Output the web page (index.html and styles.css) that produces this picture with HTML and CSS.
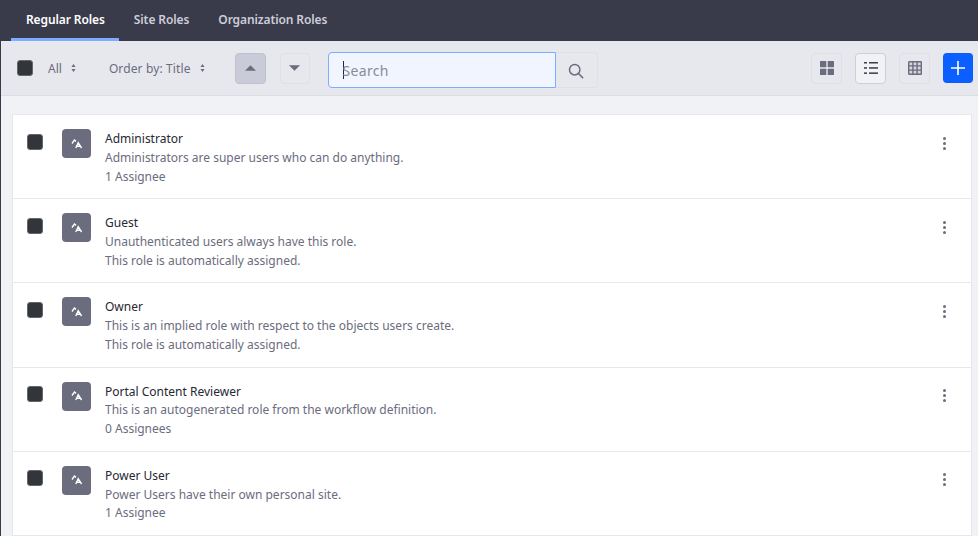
FILE: index.html
```html
<!DOCTYPE html>
<html lang="en">
<head>
  <meta charset="UTF-8">
  <title>Roles</title>
  <link rel="stylesheet" href="styles.css">
</head>
<body>
  <nav class="tabs">
    <a class="tab active">Regular Roles</a>
    <a class="tab">Site Roles</a>
    <a class="tab">Organization Roles</a>
  </nav>

  <div class="toolbar">
    <span class="check"></span>
    <span class="select select-all">All <svg class="updown" viewBox="0 0 6 10"><path d="M3 0l2.6 3.6H.4zM3 10L.4 6.4h5.2z"/></svg></span>
    <span class="select select-order">Order by: Title <svg class="updown" viewBox="0 0 6 10"><path d="M3 0l2.6 3.6H.4zM3 10L.4 6.4h5.2z"/></svg></span>
    <button class="btn btn-up"><svg class="caret" viewBox="0 0 12 6"><path d="M6 0l6 6H0z"/></svg></button>
    <button class="btn btn-down"><svg class="caret" viewBox="0 0 12 6"><path d="M0 0h12L6 6z"/></svg></button>
    <div class="search">
      <div class="search-input"><i class="cursor"></i>Search</div>
      <button class="search-btn">
        <svg class="search-icon" width="16" height="16" viewBox="0 0 16 16" fill="none" stroke="#6b6c7e" stroke-width="1.5"><circle cx="6.7" cy="6.7" r="5.2"/><path d="M10.5 10.5l4.6 4.6"/></svg>
      </button>
    </div>
    <div class="views">
      <button class="btn">
        <svg width="16" height="16" viewBox="0 0 16 16" fill="#6b6c7e"><rect x="1" y="1" width="6.3" height="6.3" rx=".5"/><rect x="8.7" y="1" width="6.3" height="6.3" rx=".5"/><rect x="1" y="8.7" width="6.3" height="6.3" rx=".5"/><rect x="8.7" y="8.7" width="6.3" height="6.3" rx=".5"/></svg>
      </button>
      <button class="btn btn-current">
        <svg width="16" height="16" viewBox="0 0 16 16" fill="#393a4a"><rect x="1" y="2" width="3" height="1.5"/><rect x="6" y="2" width="9" height="1.5"/><rect x="1" y="7.2" width="3" height="1.5"/><rect x="6" y="7.2" width="9" height="1.5"/><rect x="1" y="12.4" width="3" height="1.5"/><rect x="6" y="12.4" width="9" height="1.5"/></svg>
      </button>
      <button class="btn">
        <svg width="16" height="16" viewBox="0 0 16 16" fill="#d3d4dc" stroke="#6b6c7e" stroke-width="1.4"><rect x="1.7" y="1.7" width="12.6" height="12.6" rx=".6"/><path d="M5.9 1.7v12.6M10.1 1.7v12.6M1.7 5.9h12.6M1.7 10.1h12.6" fill="none"/></svg>
      </button>
      <button class="btn-add">
        <svg width="16" height="16" viewBox="0 0 16 16" stroke="#fff" stroke-width="1.6"><path d="M8 1v14M1 8h14"/></svg>
      </button>
    </div>
  </div>

  <main class="content">
    <ul class="list">
      <li class="row">
        <span class="check"></span>
        <span class="sticker"><svg viewBox="0 0 12 12" fill="none" stroke="#fff" stroke-width="1.4"><path d="M1 5.5L3.4 2 5 3.4M4.8 10l2.4-5.2L10.6 10M6 8.2h3"/></svg></span>
        <div class="text">
          <div class="title">Administrator</div>
          <div>Administrators are super users who can do anything.</div>
          <div>1 Assignee</div>
        </div>
        <span class="kebab"><i></i><i></i><i></i></span>
      </li>
      <li class="row">
        <span class="check"></span>
        <span class="sticker"><svg viewBox="0 0 12 12" fill="none" stroke="#fff" stroke-width="1.4"><path d="M1 5.5L3.4 2 5 3.4M4.8 10l2.4-5.2L10.6 10M6 8.2h3"/></svg></span>
        <div class="text">
          <div class="title">Guest</div>
          <div>Unauthenticated users always have this role.</div>
          <div>This role is automatically assigned.</div>
        </div>
        <span class="kebab"><i></i><i></i><i></i></span>
      </li>
      <li class="row">
        <span class="check"></span>
        <span class="sticker"><svg viewBox="0 0 12 12" fill="none" stroke="#fff" stroke-width="1.4"><path d="M1 5.5L3.4 2 5 3.4M4.8 10l2.4-5.2L10.6 10M6 8.2h3"/></svg></span>
        <div class="text">
          <div class="title">Owner</div>
          <div>This is an implied role with respect to the objects users create.</div>
          <div>This role is automatically assigned.</div>
        </div>
        <span class="kebab"><i></i><i></i><i></i></span>
      </li>
      <li class="row">
        <span class="check"></span>
        <span class="sticker"><svg viewBox="0 0 12 12" fill="none" stroke="#fff" stroke-width="1.4"><path d="M1 5.5L3.4 2 5 3.4M4.8 10l2.4-5.2L10.6 10M6 8.2h3"/></svg></span>
        <div class="text">
          <div class="title">Portal Content Reviewer</div>
          <div>This is an autogenerated role from the workflow definition.</div>
          <div>0 Assignees</div>
        </div>
        <span class="kebab"><i></i><i></i><i></i></span>
      </li>
      <li class="row">
        <span class="check"></span>
        <span class="sticker"><svg viewBox="0 0 12 12" fill="none" stroke="#fff" stroke-width="1.4"><path d="M1 5.5L3.4 2 5 3.4M4.8 10l2.4-5.2L10.6 10M6 8.2h3"/></svg></span>
        <div class="text">
          <div class="title">Power User</div>
          <div>Power Users have their own personal site.</div>
          <div>1 Assignee</div>
        </div>
        <span class="kebab"><i></i><i></i><i></i></span>
      </li>
    </ul>
  </main>
</body>
</html>
```

FILE: styles.css
```css
html, body {
  margin: 0;
  height: 536px;
  overflow: hidden;
}

body {
  font-family: "Noto Sans", sans-serif;
  font-size: 12px;
  background-color: #f1f2f5;
  color: #6b6c7e;
  border-left: 1px solid #393a4a;
}

button {
  padding: 0;
  font: inherit;
}

.tabs {
  display: flex;
  height: 41px;
  margin-left: -1px;
  padding-left: 11px;
  box-sizing: border-box;
  background-color: #393a4a;
  font-weight: 600;
  letter-spacing: -0.1px;
}

.tab {
  padding: 11px 14px 0 15px;
  color: #cdced9;
  border-bottom: 3px solid transparent;
}

.tab.active {
  color: #fff;
  border-bottom-color: #80acff;
}

.toolbar {
  display: flex;
  align-items: center;
  height: 55px;
  box-sizing: border-box;
  padding: 0 5px 0 16px;
  background-color: #e7e8ed;
  border-bottom: 1px solid #dcdde3;
}

.check {
  flex: none;
  width: 16px;
  height: 16px;
  box-sizing: border-box;
  background-color: #32363a;
  border: 1px solid #63666c;
  border-radius: 3px;
}

.select {
  display: flex;
  align-items: center;
  gap: 9px;
}

.select-all {
  margin-left: 15px;
}

.select-order {
  margin-left: 33px;
  letter-spacing: 0.12px;
}

.updown {
  width: 5px;
  height: 8px;
  fill: #6b6c7e;
}

.btn {
  flex: none;
  display: flex;
  align-items: center;
  justify-content: center;
  width: 31px;
  height: 31px;
  background-color: #e7e8ed;
  border: 1px solid #dfe0e6;
  border-radius: 4px;
}

.btn-up {
  margin-left: 30px;
  background-color: #c9ccd8;
  border-color: #bfc2ce;
}

.btn-down {
  width: 30px;
  margin-left: 14px;
}

.btn-current {
  background-color: #f1f2f5;
  border-color: #cdced9;
}

.caret {
  width: 11px;
  height: 6px;
  fill: #6b6c7e;
}

.search {
  display: flex;
  margin: 4px 0 0 18px;
}

.search-input {
  display: flex;
  align-items: center;
  width: 228px;
  height: 36px;
  box-sizing: border-box;
  padding-left: 14px;
  font-size: 14px;
  letter-spacing: 0.3px;
  color: #8a8b99;
  background-color: #f0f5ff;
  border: 1px solid #80acff;
  border-radius: 4px 0 0 4px;
}

.cursor {
  width: 1px;
  height: 18px;
  margin-right: -1px;
  background-color: #272833;
}

.search-btn {
  display: flex;
  align-items: center;
  justify-content: center;
  width: 42px;
  height: 36px;
  background-color: #e7e8ed;
  border: 1px solid #dfe0e6;
  border-left: 0;
  border-radius: 0 4px 4px 0;
}

.search-icon {
  margin-top: 2px;
}

.views {
  display: flex;
  gap: 13px;
  align-items: center;
  margin-left: auto;
}

.btn-add {
  width: 30px;
  height: 30px;
  background-color: #0b5fff;
  border: 0;
  border-radius: 4px;
}

.btn-add svg {
  display: block;
  margin: auto;
}

.content {
  padding: 18px 6px 0 11px;
}

.list {
  margin: 0;
  padding: 0;
  list-style: none;
  background-color: #fff;
  border: 1px solid #e7e8ed;
}

.row {
  display: flex;
  height: 84.2px;
  box-sizing: border-box;
  padding: 19px 25px 0 14px;
  border-bottom: 1px solid #e7e8ed;
}

.row .check {
  margin-top: -0.4px;
}

.sticker {
  flex: none;
  display: flex;
  align-items: center;
  justify-content: center;
  width: 29px;
  height: 29px;
  margin: -5px 14px 0 19px;
  background-color: #6b6c7e;
  border-radius: 4px;
}

.sticker svg {
  width: 12px;
  height: 12px;
}

.text {
  flex: 1;
  line-height: 18.8px;
  margin-top: -4px;
}

.title {
  color: #272833;
}

.kebab {
  display: flex;
  flex-direction: column;
  gap: 2px;
  margin-top: 2.6px;
}

.kebab i {
  width: 3px;
  height: 3px;
  background-color: #6b6c7e;
  border-radius: 50%;
}
```
